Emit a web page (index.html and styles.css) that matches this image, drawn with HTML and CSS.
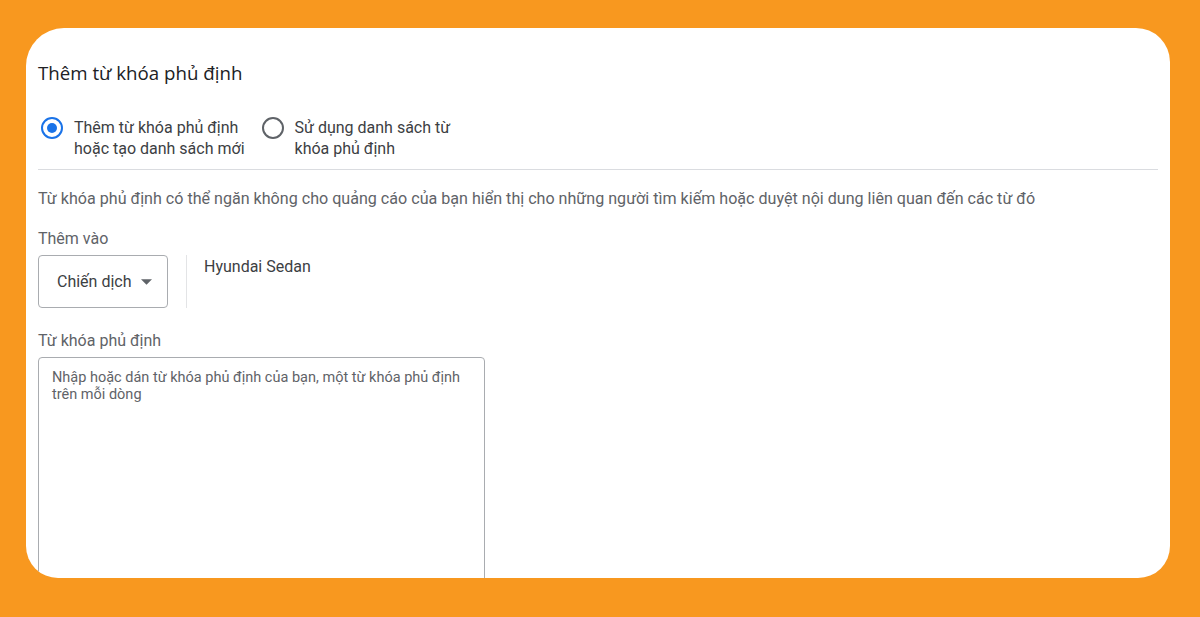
FILE: index.html
```html
<!DOCTYPE html>
<html lang="vi">
<head>
  <meta charset="UTF-8">
  <meta name="viewport" content="width=device-width, initial-scale=1.0">
  <title>Thêm từ khóa phủ định</title>
  <link rel="stylesheet" href="styles.css">
</head>
<body>
  <div class="card">
    <h2 class="title">Thêm từ khóa phủ định</h2>

    <div class="radios">
      <label class="radio checked">
        <span class="dot"></span>
        <span class="radio-text">Thêm từ khóa phủ định<br>hoặc tạo danh sách mới</span>
      </label>
      <label class="radio">
        <span class="dot"></span>
        <span class="radio-text">Sử dụng danh sách từ<br>khóa phủ định</span>
      </label>
    </div>

    <p class="desc">Từ khóa phủ định có thể ngăn không cho quảng cáo của bạn hiển thị cho những người tìm kiếm hoặc duyệt nội dung liên quan đến các từ đó</p>

    <div class="label">Thêm vào</div>
    <div class="add-row">
      <div class="select">
        <span>Chiến dịch</span>
        <svg width="11" height="6" viewBox="0 0 10 5"><path d="M0 0h10L5 5z" fill="#5f6368"/></svg>
      </div>
      <div class="sep"></div>
      <div class="campaign">Hyundai Sedan</div>
    </div>

    <div class="label label-kw">Từ khóa phủ định</div>
    <div class="textarea">Nhập hoặc dán từ khóa phủ định của bạn, một từ khóa phủ định trên mỗi dòng</div>
  </div>
</body>
</html>
```

FILE: styles.css
```css
body {
  margin: 0;
  height: 617px;
  background: #f8981f;
  font-family: Roboto, "Noto Sans", Arial, sans-serif;
  overflow: hidden;
}

.card {
  margin: 28px 30px 0 26px;
  height: 550px;
  background: #fff;
  border-radius: 38px 34px 32px 32px;
  padding: 33px 12px 0 12px;
  box-sizing: border-box;
  overflow: hidden;
}

.title {
  margin: 0;
  font-family: "Open Sans", Roboto, sans-serif;
  font-size: 18.7px;
  line-height: 24px;
  font-weight: 500;
  color: #202124;
}

.radios {
  display: flex;
  gap: 14px;
  margin-top: 32px;
  padding-bottom: 10px;
  border-bottom: 1px solid #dadce0;
}

.radio {
  display: flex;
  align-items: flex-start;
  gap: 11px;
  font-size: 16px;
  line-height: 21px;
  color: #3c4043;
}

.dot {
  width: 18px;
  height: 18px;
  margin-left: 3px;
  border: 2px solid #5f6368;
  border-radius: 50%;
  flex: none;
  position: relative;
}

.checked .dot {
  border-color: #1a73e8;
}

.checked .dot::after {
  content: "";
  position: absolute;
  left: 4px;
  top: 4px;
  width: 10px;
  height: 10px;
  border-radius: 50%;
  background: #1a73e8;
}

.desc {
  margin: 19px 0 0;
  font-size: 16.1px;
  line-height: 20px;
  color: #5f6368;
}

.label {
  margin-top: 20px;
  font-size: 16px;
  line-height: 20px;
  color: #5f6368;
}

.add-row {
  display: flex;
  margin-top: 6px;
}

.select {
  width: 130px;
  height: 53px;
  box-sizing: border-box;
  border: 1px solid #a9acb0;
  border-radius: 4px;
  display: flex;
  align-items: center;
  padding-left: 18px;
  gap: 9px;
  font-size: 16px;
  color: #3c4043;
}

.sep {
  width: 1px;
  height: 53px;
  background: #e3e4e6;
  margin-left: 18px;
}

.campaign {
  margin: 2px 0 0 17px;
  font-size: 16px;
  line-height: 20px;
  color: #3c4043;
}

.label-kw {
  margin-top: 23px;
}

.textarea {
  margin-top: 6px;
  width: 447px;
  height: 240px;
  box-sizing: border-box;
  border: 1px solid #a9acb0;
  border-radius: 4px;
  padding: 11px 20px 0 13px;
  font-size: 14.5px;
  line-height: 17px;
  color: #5f6368;
}
```
